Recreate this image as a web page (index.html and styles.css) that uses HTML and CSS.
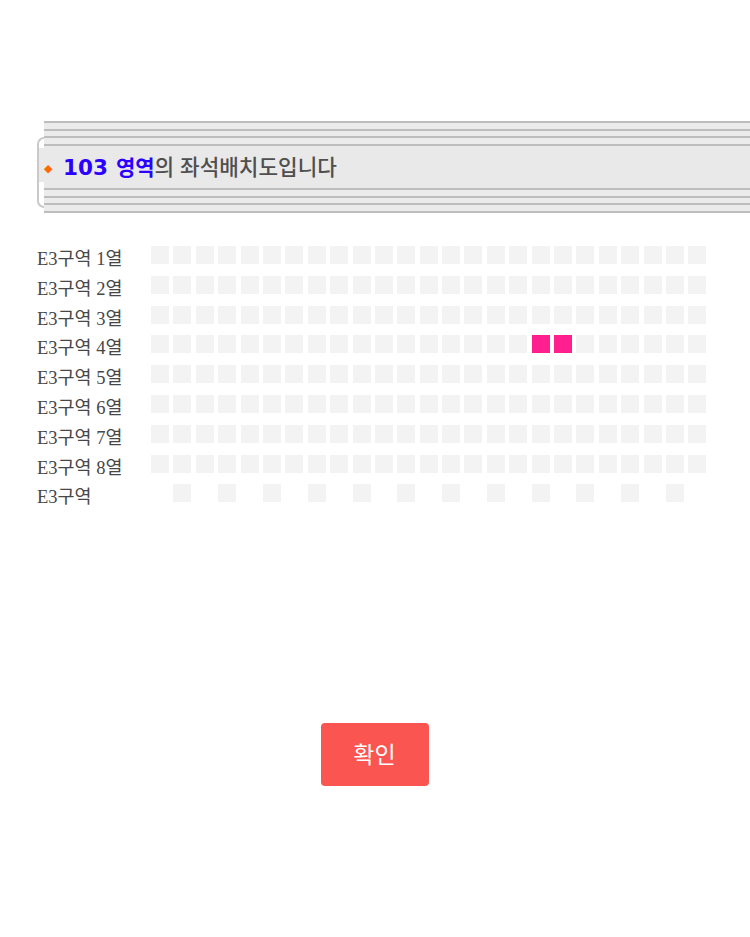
FILE: index.html
```html
<!DOCTYPE html>
<html lang="ko">
<head>
<meta charset="utf-8">
<title>좌석배치도</title>
<link rel="stylesheet" href="styles.css">
</head>
<body>
<div class="page">
  <div class="banner">
    <div class="bracket"></div>
    <div class="stripes">
      <div class="lines"></div>
      <div class="band">
        <span class="diamond">◆</span>
        <span class="title"><span class="num">103</span><span class="area">영역</span><span class="rest">의 좌석배치도입니다</span></span>
      </div>
      <div class="lines"></div>
    </div>
  </div>

  <div class="rows" id="rows"></div>

  <div class="actions">
    <button class="confirm" type="button">확인</button>
  </div>
</div>
<script src="app.js"></script>
</body>
</html>
```

FILE: app.js
```js
(function () {
  var rows = document.getElementById('rows');
  var labels = ['E3구역 1열','E3구역 2열','E3구역 3열','E3구역 4열','E3구역 5열','E3구역 6열','E3구역 7열','E3구역 8열','E3구역'];
  labels.forEach(function (label, r) {
    var row = document.createElement('div');
    row.className = 'row';
    var l = document.createElement('div');
    l.className = 'label';
    l.textContent = label;
    row.appendChild(l);
    var seats = document.createElement('div');
    seats.className = 'seats';
    for (var i = 0; i < 25; i++) {
      var s = document.createElement('span');
      s.className = 'seat';
      if (r === 8 && i % 2 === 0) s.className += ' none';
      if (r === 3 && (i === 17 || i === 18)) s.className += ' picked';
      seats.appendChild(s);
    }
    row.appendChild(seats);
    rows.appendChild(row);
  });
})();
```

FILE: styles.css
```css
html, body {
  margin: 0;
  padding: 0;
  background: #fff;
}
body {
  font-family: "Liberation Serif", "Noto Sans CJK KR", serif;
}
.page {
  padding-top: 121px;
}
.banner {
  display: flex;
  margin-left: 37px;
}
.bracket {
  width: 5px;
  height: 67px;
  margin-top: 16px;
  border: 2px solid #c9c9c9;
  border-right: 0;
  border-radius: 7px 0 0 7px;
  background: linear-gradient(to bottom, #fff 0 9px, #e9e9e9 9px 43px, #fff 43px);
}
.stripes {
  flex: 1;
}
.lines {
  height: 24.5px;
  background: repeating-linear-gradient(to bottom, #bdbdbd 0 2px, #ebebeb 2px 7.5px);
}
.band {
  height: 42.5px;
  background: #e9e9e9;
  display: flex;
  align-items: center;
}
.diamond {
  color: #ff6a00;
  font-family: "DejaVu Sans", sans-serif;
  font-size: 11px;
  width: 19px;
  padding-left: 0;
  padding-top: 3px;
  box-sizing: border-box;
}
.title {
  font-family: "DejaVu Sans", "Noto Sans CJK KR", sans-serif;
  font-weight: bold;
  white-space: nowrap;
  line-height: 1;
  padding-top: 0;
}
.num {
  font-size: 21.5px;
  color: #2a00ff;
  margin-right: 8px;
}
.area {
  font-family: "Noto Sans CJK KR", sans-serif;
  font-size: 21px;
  color: #2a00ff;
}
.rest {
  font-family: "Noto Sans CJK KR", sans-serif;
  font-size: 21.3px;
  font-weight: 500;
  color: #4f4f4f;
}
.rows {
  margin-top: 33.5px;
  margin-left: 37px;
  display: flex;
  flex-direction: column;
  gap: 11.8px;
}
.row {
  display: flex;
  height: 18px;
}
.label {
  width: 114px;
  font-size: 18.5px;
  line-height: 18px;
  padding-top: 4px;
  color: #474747;
  white-space: nowrap;
}
.seats {
  display: flex;
  gap: 4.4px;
}
.seat {
  width: 18px;
  height: 18px;
  background: #f3f3f3;
}
.seat.none {
  visibility: hidden;
}
.seat.picked {
  background: #ff1f8e;
}
.actions {
  display: flex;
  justify-content: center;
  margin-top: 221px;
}
.confirm {
  width: 108px;
  height: 63px;
  border: 0;
  border-radius: 4px;
  background: #fa5550;
  color: #fff;
  font-family: "Noto Sans CJK KR", sans-serif;
  font-size: 23px;
  padding: 0 0 3px;
  margin-right: 1px;
}
```
